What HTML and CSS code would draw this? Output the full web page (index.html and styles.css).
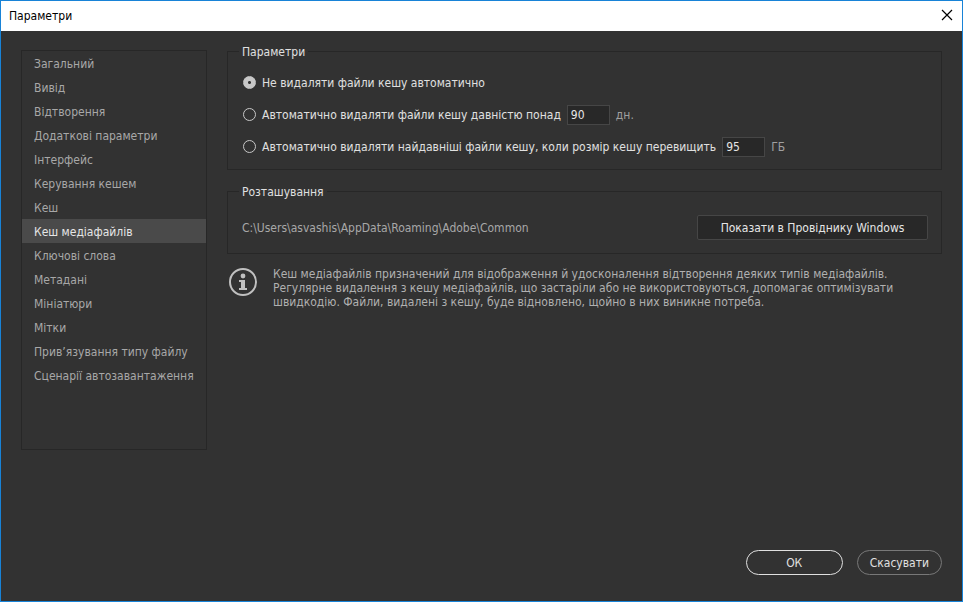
FILE: index.html
```html
<!DOCTYPE html>
<html lang="uk">
<head>
<meta charset="utf-8">
<title>Параметри</title>
<link rel="stylesheet" href="styles.css">
</head>
<body>
<div class="window">
  <header class="titlebar">
    <h1 class="title">Параметри</h1>
    <button class="close" type="button" aria-label="Закрити">
      <svg width="12" height="12" viewBox="0 0 12 12" aria-hidden="true"><path d="M1 1 11 11M11 1 1 11" stroke="#000" stroke-width="1.2" fill="none"/></svg>
    </button>
  </header>
  <form class="body">
    <div class="columns">
      <nav class="sidebar">
        <a class="item" href="#general">Загальний</a>
        <a class="item" href="#output">Вивід</a>
        <a class="item" href="#playback">Відтворення</a>
        <a class="item" href="#advanced">Додаткові параметри</a>
        <a class="item" href="#interface">Інтерфейс</a>
        <a class="item" href="#cache-management">Керування кешем</a>
        <a class="item" href="#cache">Кеш</a>
        <a class="item selected" href="#media-cache" aria-current="page">Кеш медіафайлів</a>
        <a class="item" href="#keywords">Ключові слова</a>
        <a class="item" href="#metadata">Метадані</a>
        <a class="item" href="#thumbnails">Мініатюри</a>
        <a class="item" href="#labels">Мітки</a>
        <a class="item" href="#file-types">Прив’язування типу файлу</a>
        <a class="item" href="#startup-scripts">Сценарії автозавантаження</a>
      </nav>
      <main class="content">
        <fieldset class="group options">
          <legend>Параметри</legend>
          <div class="row">
            <input class="radio" type="radio" name="policy" id="keep" checked>
            <label for="keep">Не видаляти файли кешу автоматично</label>
          </div>
          <div class="row">
            <input class="radio" type="radio" name="policy" id="by-age">
            <label for="by-age">Автоматично видаляти файли кешу давністю понад</label>
            <input class="number" type="text" id="days" value="90" aria-label="Кількість днів">
            <label class="unit" for="days">дн.</label>
          </div>
          <div class="row">
            <input class="radio" type="radio" name="policy" id="by-size">
            <label for="by-size">Автоматично видаляти найдавніші файли кешу, коли розмір кешу перевищить</label>
            <input class="number" type="text" id="size" value="95" aria-label="Розмір кешу">
            <label class="unit" for="size">ГБ</label>
          </div>
        </fieldset>
        <fieldset class="group location">
          <legend>Розташування</legend>
          <div class="path-row">
            <span class="path">C:\Users\asvashis\AppData\Roaming\Adobe\Common</span>
            <button class="reveal" type="button">Показати в Провіднику Windows</button>
          </div>
        </fieldset>
        <div class="info">
          <svg class="info-icon" width="30" height="30" viewBox="0 0 30 30" aria-hidden="true">
            <circle cx="15" cy="15" r="13" fill="none" stroke="#c0c0c0" stroke-width="2"/>
            <circle cx="15" cy="9" r="2.4" fill="#c0c0c0"/>
            <path d="M11 13H17V21H19V23H11V21H13V15H11Z" fill="#c0c0c0"/>
          </svg>
          <p>Кеш медіафайлів призначений для відображення й удосконалення відтворення деяких типів медіафайлів. Регулярне видалення з кешу медіафайлів, що застаріли або не використовуються, допомагає оптимізувати швидкодію. Файли, видалені з кешу, буде відновлено, щойно в них виникне потреба.</p>
        </div>
      </main>
    </div>
    <footer class="actions">
      <button class="pill primary" type="submit">ОК</button>
      <button class="pill" type="button">Скасувати</button>
    </footer>
  </form>
</div>
</body>
</html>
```
FILE: styles.css
```css
* {
  box-sizing: border-box;
}

body {
  margin: 0;
}

body,
button,
input {
  font-family: Tahoma, "DejaVu Sans Condensed", "Noto Sans", sans-serif;
  font-size: 12px;
  line-height: 16px;
}

.window {
  display: flex;
  flex-direction: column;
  min-height: 100vh;
  border: 1px solid #1883d7;
  background: #323232;
  color: #e0e0e0;
}

.titlebar {
  display: flex;
  align-items: center;
  justify-content: space-between;
  height: 30px;
  padding: 0 8px;
  background: #fff;
  color: #000;
}

.title {
  margin: 0;
  font-size: 12px;
  font-weight: 400;
}

.close {
  display: flex;
  padding: 0 1px 2px;
  border: 0;
  background: none;
}

.body {
  display: flex;
  flex: 1;
  flex-direction: column;
  justify-content: space-between;
  padding: 12px 20px 26px;
}

.columns {
  display: flex;
  align-items: flex-start;
  gap: 20px;
}

.sidebar {
  flex: none;
  width: 186px;
  min-height: 400px;
  margin-top: 7px;
  border: 1px solid #272727;
}

.item {
  display: block;
  padding: 5px 12px 3px;
  color: #a8a8a8;
  text-decoration: none;
  white-space: nowrap;
}

.selected {
  background: #4a4a4a;
  color: #e6e6e6;
}

.content {
  flex: 1;
  min-width: 0;
}

.group {
  min-width: 0;
  margin: 0 0 13px;
  border: 1px solid #272727;
}

.group legend {
  padding: 1px 3px 0;
}

.options {
  display: flex;
  flex-direction: column;
  gap: 11px;
  padding: 12px 11px;
}

.row {
  display: flex;
  align-items: center;
  min-height: 21px;
  padding-left: 4px;
  gap: 6px;
}

.radio {
  flex: none;
  width: 13px;
  height: 13px;
  margin: 0;
  border: 1px solid #c8c8c8;
  border-radius: 50%;
  appearance: none;
}

.radio:checked {
  background: radial-gradient(circle, #323232 0 1px, #c8c8c8 2px);
}

.number {
  width: 43px;
  height: 20px;
  padding: 0 3px;
  border: 1px solid #464646;
  background: #282828;
  color: #e6e6e6;
}

.unit {
  color: #a0a0a0;
}

.location {
  padding: 15px 13px 13px 11px;
}

.path-row {
  display: flex;
  align-items: center;
  justify-content: space-between;
  padding-left: 3px;
}

.path {
  color: #a8a8a8;
}

.reveal {
  width: 231px;
  height: 25px;
  padding: 0;
  border: 1px solid #464646;
  border-radius: 2px;
  background: #282828;
  color: #e6e6e6;
}

.info {
  display: flex;
  gap: 15px;
  padding-left: 1px;
  color: #b0b0b0;
}

.info-icon {
  flex: none;
}

.info p {
  max-width: 640px;
  margin: 0;
  line-height: 14px;
}

.actions {
  display: flex;
  justify-content: flex-end;
  gap: 14px;
}

.pill {
  height: 25px;
  padding: 0 12px;
  border: 1px solid #787878;
  border-radius: 13px;
  background: none;
  color: #e0e0e0;
}

.primary {
  min-width: 97px;
  border-color: #e0e0e0;
}
```
